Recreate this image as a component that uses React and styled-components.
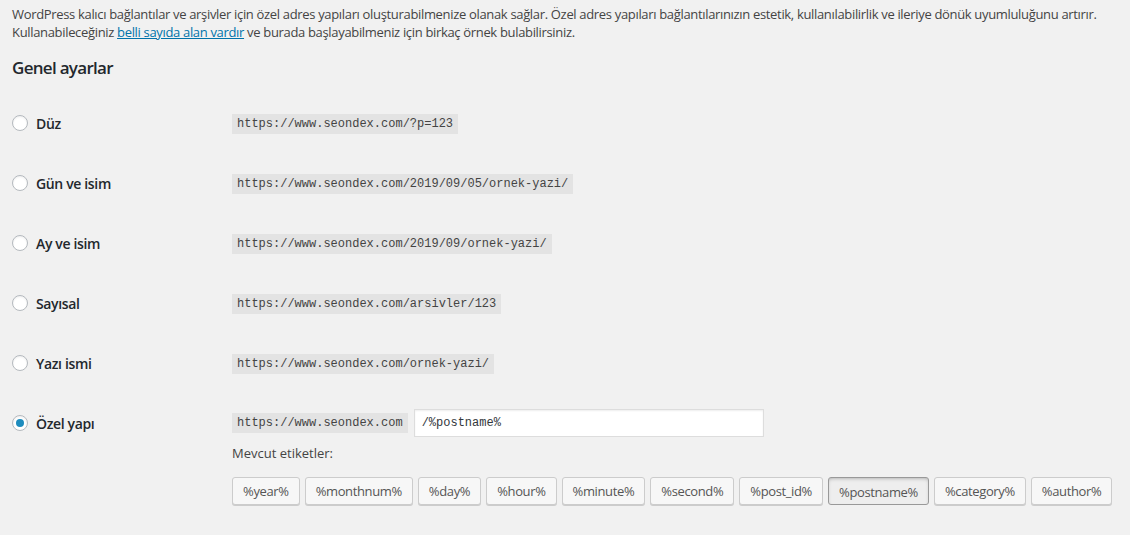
import React from "react";
import styled, { createGlobalStyle, css } from "styled-components";

const GlobalStyle = createGlobalStyle`
  html, body {
    margin: 0;
    padding: 0;
    background: #f1f1f1;
  }
  body {
    font-family: "Open Sans", "Noto Sans", sans-serif;
    font-size: 13px;
    color: #444;
  }
`;

const Page = styled.div`
  padding: 5px 12px 0 12px;
  min-height: 530px;
  box-sizing: border-box;
`;

const Intro = styled.p`
  margin: 0;
  font-size: 13px;
  line-height: 18px;
  color: #444;
  letter-spacing: -0.33px;
`;

const Link = styled.a`
  color: #0073aa;
  text-decoration: underline;
`;

const Heading = styled.h2`
  margin: 16px 0 14px 0;
  font-size: 17px;
  line-height: 22px;
  font-weight: 600;
  color: #23282d;
  letter-spacing: -0.7px;
`;

const Table = styled.div`
  display: flex;
  flex-direction: column;
`;

const Row = styled.div`
  display: grid;
  grid-template-columns: 220px 1fr;
  min-height: 60px;
  align-items: ${(p) => (p.$top ? "start" : "center")};
`;

const Choice = styled.label`
  display: flex;
  align-items: center;
  gap: 8px;
  height: 60px;
  font-size: 14px;
  font-weight: 600;
  color: #23282d;
  letter-spacing: -0.35px;
`;

const Radio = styled.span`
  width: 16px;
  height: 16px;
  box-sizing: border-box;
  border-radius: 50%;
  border: 1px solid #b4b9be;
  background: #fff;
  box-shadow: inset 0 1px 2px rgba(0, 0, 0, 0.07);
  display: flex;
  align-items: center;
  justify-content: center;
  flex-shrink: 0;

  ${(p) =>
    p.$checked &&
    css`
      &::before {
        content: "";
        width: 8px;
        height: 8px;
        border-radius: 50%;
        background: #1e8cbe;
      }
    `}
`;

const Code = styled.code`
  display: inline-block;
  font-family: "Liberation Mono", "DejaVu Sans Mono", monospace;
  font-size: 12px;
  line-height: 20px;
  height: 20px;
  padding: 0 5px;
  background: rgba(0, 0, 0, 0.055);
  color: #444;
`;

const Cell = styled.div`
  display: flex;
  flex-direction: column;
  padding-top: ${(p) => (p.$top ? "16px" : "0")};
`;

const Structure = styled.div`
  display: flex;
  align-items: center;
  gap: 6px;
  height: 28px;
`;

const Input = styled.input`
  width: 350px;
  height: 28px;
  box-sizing: border-box;
  border: 1px solid #ddd;
  background: #fff;
  box-shadow: inset 0 1px 2px rgba(0, 0, 0, 0.07);
  padding: 0 7px;
  font-family: "Liberation Mono", "DejaVu Sans Mono", monospace;
  font-size: 12px;
  color: #32373c;
  outline: none;
`;

const TagsLabel = styled.div`
  margin-top: 7px;
  line-height: 18px;
  font-size: 13px;
  color: #444;
`;

const Tags = styled.div`
  display: flex;
  gap: 5px;
  margin-top: 15px;
`;

const TagButton = styled.button`
  height: 28px;
  box-sizing: border-box;
  padding: 0 10px;
  border-radius: 3px;
  font-family: "Open Sans", "Noto Sans", sans-serif;
  font-size: 13px;
  letter-spacing: -0.37px;
  color: #555;
  background: #f7f7f7;
  border: 1px solid #ccc;
  box-shadow: 0 1px 0 #ccc;
  cursor: pointer;

  ${(p) =>
    p.$active &&
    css`
      background: #eee;
      border-color: #999;
      box-shadow: inset 0 2px 5px -3px rgba(0, 0, 0, 0.5);
      padding-top: 2px;
    `}
`;

const options = [
  { label: "Düz", url: "https://www.seondex.com/?p=123" },
  { label: "Gün ve isim", url: "https://www.seondex.com/2019/09/05/ornek-yazi/" },
  { label: "Ay ve isim", url: "https://www.seondex.com/2019/09/ornek-yazi/" },
  { label: "Sayısal", url: "https://www.seondex.com/arsivler/123" },
  { label: "Yazı ismi", url: "https://www.seondex.com/ornek-yazi/" },
];

const tags = [
  "%year%",
  "%monthnum%",
  "%day%",
  "%hour%",
  "%minute%",
  "%second%",
  "%post_id%",
  "%postname%",
  "%category%",
  "%author%",
];

export default function App() {
  return (
    <>
      <GlobalStyle />
      <Page>
        <Intro>
          WordPress kalıcı bağlantılar ve arşivler için özel adres yapıları oluşturabilmenize olanak sağlar. Özel adres yapıları bağlantılarınızın estetik, kullanılabilirlik ve ileriye dönük uyumluluğunu artırır.
          <br />
          Kullanabileceğiniz <Link href="#">belli sayıda alan vardır</Link> ve burada başlayabilmeniz için birkaç örnek bulabilirsiniz.
        </Intro>
        <Heading>Genel ayarlar</Heading>
        <Table>
          {options.map((o) => (
            <Row key={o.label}>
              <Choice>
                <Radio />
                {o.label}
              </Choice>
              <Cell>
                <div>
                  <Code>{o.url}</Code>
                </div>
              </Cell>
            </Row>
          ))}
          <Row $top>
            <Choice>
              <Radio $checked />
              Özel yapı
            </Choice>
            <Cell $top>
              <Structure>
                <Code>https://www.seondex.com</Code>
                <Input defaultValue="/%postname%" />
              </Structure>
              <TagsLabel>Mevcut etiketler:</TagsLabel>
              <Tags>
                {tags.map((t) => (
                  <TagButton key={t} $active={t === "%postname%"}>
                    {t}
                  </TagButton>
                ))}
              </Tags>
            </Cell>
          </Row>
        </Table>
      </Page>
    </>
  );
}
